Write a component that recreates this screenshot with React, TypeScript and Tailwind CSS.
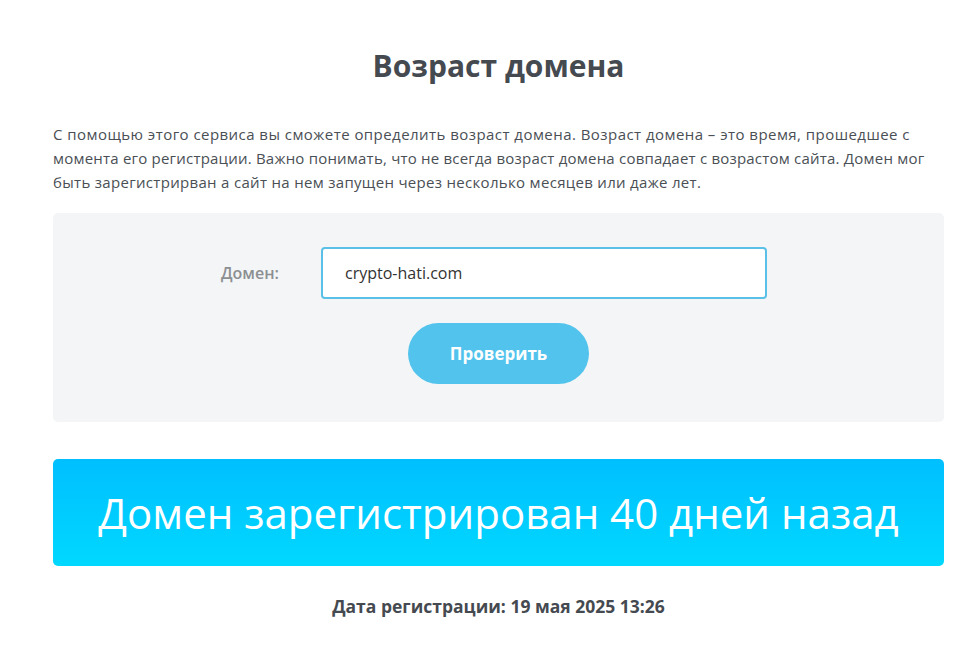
import React, { useState } from 'react';

// Проверка возраста домена
export default function App() {
  const [domain, setDomain] = useState('crypto-hati.com');

  return (
    <div className="min-h-[646px] bg-white" style={{ fontFamily: '"Open Sans", "Liberation Sans", sans-serif' }}>
      <div className="ml-[53px] w-[891px] pt-[45px]">
        <h1 className="text-center text-[30px] font-bold leading-[42px] text-[#454a50]">
          Возраст домена
        </h1>

        <p className="mt-[35px] whitespace-nowrap text-[15px] font-medium leading-[24px] text-[#4a4f55]">
          <span className="tracking-[0.45px]">
            С помощью этого сервиса вы сможете определить возраст домена. Возраст домена – это время, прошедшее с
          </span>
          <br />
          <span className="tracking-[0.21px]">
            момента его регистрации. Важно понимать, что не всегда возраст домена совпадает с возрастом сайта. Домен мог
          </span>
          <br />
          <span className="tracking-[0.31px]">
            быть зарегистрирван а сайт на нем запущен через несколько месяцев или даже лет.
          </span>
        </p>

        <div className="mt-[19px] flex h-[209px] flex-col items-center rounded-[5px] bg-[#f3f5f6] pt-[34px]">
          <div className="mr-[9px] flex items-center">
            <label className="w-[100px] text-[16px] font-semibold text-[#8c8f92]">Домен:</label>
            <input
              value={domain}
              onChange={(e) => setDomain(e.target.value)}
              className="h-[52px] w-[446px] rounded-[4px] border-2 border-[#5bc0e8] bg-white px-[22px] text-[16px] text-[#333] outline-none"
            />
          </div>
          <button className="mt-[24px] h-[61px] w-[181px] rounded-full bg-[#52c3ec] text-[17px] font-bold text-white">
            Проверить
          </button>
        </div>

        <div className="mt-[37px] flex h-[107px] items-center justify-center rounded-[5px] bg-gradient-to-b from-[#00bfff] to-[#00d8ff]">
          <span className="text-[42px] font-normal text-white">Домен зарегистрирован 40 дней назад</span>
        </div>

        <div className="mt-[27px] text-center text-[17.5px] font-bold text-[#454a50]">
          Дата регистрации: 19 мая 2025 13:26
        </div>
      </div>
    </div>
  );
}
